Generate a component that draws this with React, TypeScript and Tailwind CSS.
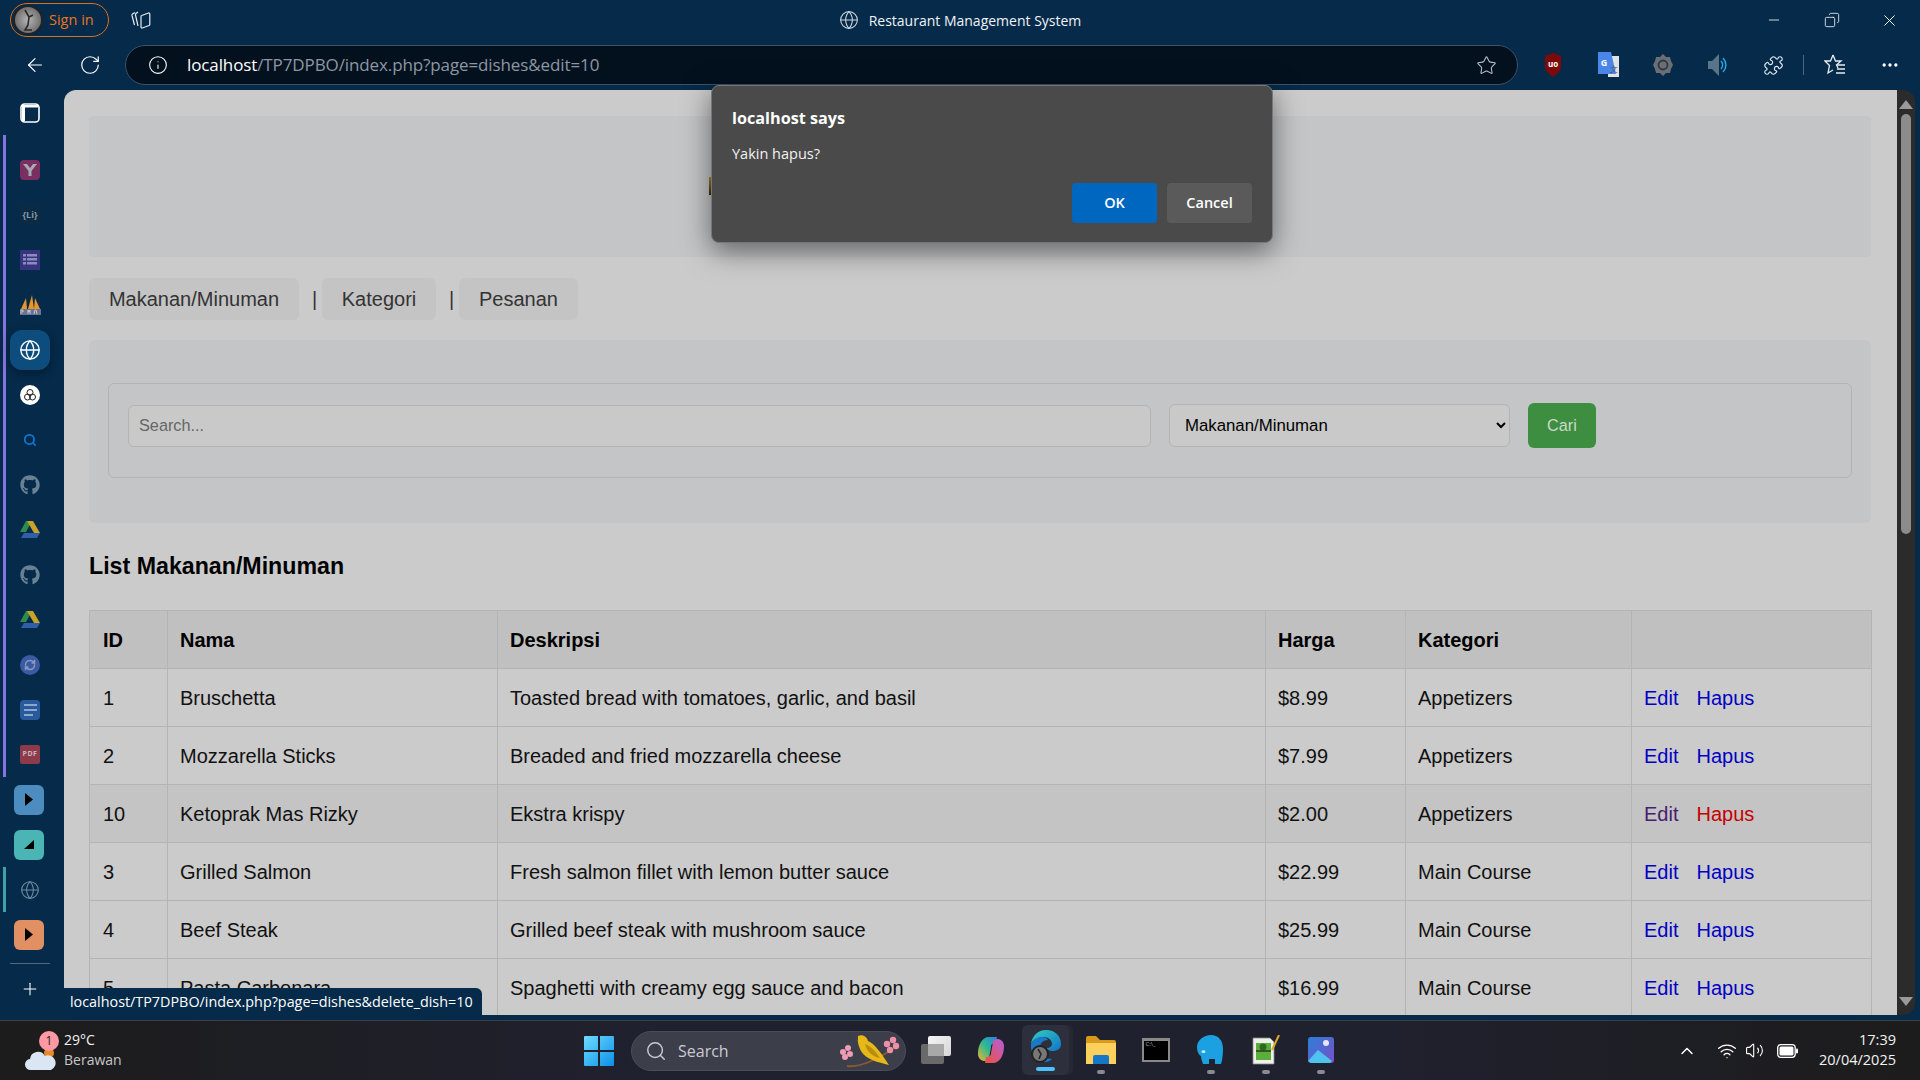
import { ArrowLeft, Copy, Globe, Info, Minus, MoreHorizontal, Plus, Puzzle, RefreshCw, RotateCw, Search, Star, X, ChevronUp, Wifi, Volume2 } from "lucide-react";
import { FaGithub } from "react-icons/fa";

const dishes = [
  { id: 1, nama: "Bruschetta", deskripsi: "Toasted bread with tomatoes, garlic, and basil", harga: "$8.99", kategori: "Appetizers" },
  { id: 2, nama: "Mozzarella Sticks", deskripsi: "Breaded and fried mozzarella cheese", harga: "$7.99", kategori: "Appetizers" },
  { id: 10, nama: "Ketoprak Mas Rizky", deskripsi: "Ekstra krispy", harga: "$2.00", kategori: "Appetizers" },
  { id: 3, nama: "Grilled Salmon", deskripsi: "Fresh salmon fillet with lemon butter sauce", harga: "$22.99", kategori: "Main Course" },
  { id: 4, nama: "Beef Steak", deskripsi: "Grilled beef steak with mushroom sauce", harga: "$25.99", kategori: "Main Course" },
  { id: 5, nama: "Pasta Carbonara", deskripsi: "Spaghetti with creamy egg sauce and bacon", harga: "$16.99", kategori: "Main Course" },
];

const ui = "font-['Open_Sans','Noto_Sans',sans-serif]";
const th = "border border-[#b4b4b4] bg-[#c0c0c0] px-[12px] text-left font-bold text-black first:pl-[13px]";
const td = "border border-[#b4b4b4] px-[12px] h-[58px] first:pl-[13px]";

function Slot({ children }: { children: React.ReactNode }) {
  return <div className="flex h-[45px] w-[48px] items-center justify-center">{children}</div>;
}

function Tile({ color, children }: { color: string; children: React.ReactNode }) {
  return <div className={`flex h-[30px] w-[30px] items-center justify-center rounded-md ${color}`}>{children}</div>;
}

function Drive() {
  return (
    <svg width="20" height="18" viewBox="0 0 20 18">
      <path d="M7 0h6l-6 11H1z" transform="translate(-1 0)" fill="#2f8a4c" />
      <path d="M7 0h6l7 12h-6z" fill="#c9a227" />
      <path d="M4 12h16l-3 5H1z" fill="#2f5fa8" />
    </svg>
  );
}

function Sidebar() {
  return (
    <div className="flex w-[64px] shrink-0 flex-col pl-[6px]">
      <Slot>
        <svg width="20" height="20" viewBox="0 0 20 20" fill="none">
          <rect x="1" y="1" width="18" height="18" rx="3.5" stroke="#fff" strokeWidth="1.6" />
          <path d="M2 2h16v2.500H5V18H2z" fill="#fff" />
        </svg>
      </Slot>
      <div className="-ml-[3px] flex flex-col border-l-[3px] border-[#8574e0] pt-[12px]">
        <Slot>
          <div className="flex h-5 w-5 items-center justify-center rounded-sm bg-[#7a2f60]">
            <svg width="14" height="12" viewBox="0 0 14 12"><path d="M0 0h4l3 4 3-4h4L8.5 7v5h-3V7z" fill="#a7a9b3" /></svg>
          </div>
        </Slot>
        <Slot>
          <div className={`flex h-5 w-5 items-center justify-center bg-[#0b2b45] text-[9px] font-bold text-[#8497a6] ${ui}`}>{"{Li}"}</div>
        </Slot>
        <Slot>
          <div className="flex h-5 w-5 items-center justify-center bg-[#383580]">
            <svg width="14" height="11" viewBox="0 0 14 11" fill="#8a8dbb">
              <path d="M0 0h3v2.5H0zM4 0h10v2.5H4zM0 4h3v2.5H0zM4 4h10v2.5H4zM0 8h3v2.5H0zM4 8h10v2.5H4z" />
            </svg>
          </div>
        </Slot>
        <Slot>
          <svg width="21" height="20" viewBox="0 0 21 20">
            <path d="M1 14 6 3l1 11zM8 14 12 0l2 14zM14 14l1-11 5 11z" fill="#e8962a" />
            <rect x="0" y="14" width="21" height="6" fill="#6a7390" />
            <path d="M1 19v-4h2v2H2M8 19v-4l1 2 1-2v4M14 19l1-4h1l1 4" stroke="#d6d9e6" strokeWidth="0.8" fill="none" />
          </svg>
        </Slot>
        <Slot>
          <div className="flex h-10 w-10 items-center justify-center rounded-xl bg-[#0d4d7e] shadow-[0_3px_8px_rgba(0,0,0,0.35)]">
            <Globe size={22} color="#fff" strokeWidth={1.5} />
          </div>
        </Slot>
        <Slot>
          <div className="flex h-5 w-5 items-center justify-center rounded-full bg-white">
            <svg width="14" height="14" viewBox="0 0 14 14" fill="none" stroke="#222" strokeWidth="1">
              <circle cx="7" cy="4.5" r="3" />
              <circle cx="4.5" cy="9" r="3" />
              <circle cx="9.5" cy="9" r="3" />
            </svg>
          </div>
        </Slot>
        <Slot><Search size={14} color="#0b78d0" strokeWidth={3} /></Slot>
        <Slot><FaGithub size={20} color="#6a8093" /></Slot>
        <Slot><Drive /></Slot>
        <Slot><FaGithub size={20} color="#6a8093" /></Slot>
        <Slot><Drive /></Slot>
        <Slot>
          <div className="flex h-5 w-5 items-center justify-center rounded-full bg-[#3a5aa5]">
            <RefreshCw size={12} color="#8d9bb8" strokeWidth={3} />
          </div>
        </Slot>
        <Slot>
          <div className="flex h-5 w-5 items-center justify-center rounded-sm bg-[#2a5a9e]">
            <svg width="13" height="12" viewBox="0 0 13 12" fill="#8ba7cb"><path d="M0 0h13v2H0zM0 5h13v2H0zM0 10h9v2H0z" /></svg>
          </div>
        </Slot>
        <Slot>
          <div className="relative flex h-[19px] w-5 items-center justify-center rounded-[2px] bg-[#8d3a4b]">
            <span className={`text-[7px] font-bold tracking-[0.5px] text-[#c9b6bd] ${ui}`}>PDF</span>
          </div>
        </Slot>
      </div>
      <div className="-ml-[1px]">
        <Slot><Tile color="bg-[#4d8cbe]"><svg width="8" height="13" viewBox="0 0 8 13"><path d="M0 0l8 6.5L0 13z" /></svg></Tile></Slot>
        <Slot><Tile color="bg-[#4bb4b5]"><svg width="10" height="9" viewBox="0 0 10 9"><path d="M10 0v9H0z" /></svg></Tile></Slot>
      </div>
      <div className="-ml-[3px] border-l-[3px] border-[#3fa3a6]">
        <Slot><Globe size={20} color="#6f8aa0" strokeWidth={1.3} /></Slot>
      </div>
      <div className="-ml-[1px]">
        <Slot><Tile color="bg-[#e09063]"><svg width="8" height="13" viewBox="0 0 8 13"><path d="M0 0l8 6.5L0 13z" /></svg></Tile></Slot>
      </div>
      <div className="mx-[4px] mt-[6px] h-px w-[40px] bg-[#52697d]" />
      <div className="mt-[2px]">
        <Slot><Plus size={20} color="#fff" strokeWidth={1.3} /></Slot>
      </div>
    </div>
  );
}

function Page() {
  return (
    <div className="flex-1 overflow-hidden rounded-tl-xl bg-[#cbcbcb] pt-[26px] pr-[26px] pl-[25px] font-['Liberation_Sans',Arial,sans-serif]">
      <div className="h-[141px] rounded-sm bg-[#c4c5c7]" />
      <div className="mt-[21px] flex items-center text-[20px] text-[#333]">
        <span className="flex h-[42px] w-[210px] items-center justify-center rounded-md bg-[#c4c4c4]">Makanan/Minuman</span>
        <span className="w-[23px] pl-[8px] text-center">|</span>
        <span className="flex h-[42px] w-[114px] items-center justify-center rounded-md bg-[#c4c4c4]">Kategori</span>
        <span className="w-[23px] pl-[8px] text-center">|</span>
        <span className="flex h-[42px] w-[119px] items-center justify-center rounded-md bg-[#c4c4c4]">Pesanan</span>
      </div>
      <div className="mt-[20px] h-[183px] rounded-md bg-[#c4c5c7] px-[19px] pt-[43px]">
        <div className="h-[95px] rounded-md border border-[#b4b4b4] px-[19px] pt-[19px]">
          <div className="flex h-[45px] items-center gap-[18px]">
            <input
              placeholder="Search..."
              className="h-[42px] w-[1023px] rounded-md border border-[#b4b4b4] bg-[#c9c9c9] px-[10px] text-[16.25px] outline-none placeholder:text-[#666]"
            />
            <select defaultValue="makanan" className="h-[43px] w-[341px] rounded-md border border-[#b4b4b4] bg-[#c9c9c9] px-[11px] text-[16.8px] text-black outline-none">
              <option value="makanan">Makanan/Minuman</option>
            </select>
            <button className="h-[45px] w-[68px] rounded-md bg-[#3e8e41] text-[16.25px] text-[#c9d9c9]">Cari</button>
          </div>
        </div>
      </div>
      <h2 className="mt-[29px] text-[23.2px] leading-[28px] font-bold text-black">List Makanan/Minuman</h2>
      <table className="mt-[30px] w-[1782px] table-fixed border-collapse text-[20px] text-[#111]">
        <colgroup>
          <col className="w-[78px]" />
          <col className="w-[330px]" />
          <col className="w-[768px]" />
          <col className="w-[140px]" />
          <col className="w-[226px]" />
          <col className="w-[240px]" />
        </colgroup>
        <thead>
          <tr className="h-[58px]">
            <th className={th}>ID</th>
            <th className={th}>Nama</th>
            <th className={th}>Deskripsi</th>
            <th className={th}>Harga</th>
            <th className={th}>Kategori</th>
            <th className={th}></th>
          </tr>
        </thead>
        <tbody>
          {dishes.map((d) => {
            const picked = d.id === 10;
            return (
              <tr key={d.id} className={picked ? "bg-[#c4c4c4]" : ""}>
                <td className={td}>{d.id}</td>
                <td className={td}>{d.nama}</td>
                <td className={td}>{d.deskripsi}</td>
                <td className={td}>{d.harga}</td>
                <td className={td}>{d.kategori}</td>
                <td className={td}>
                  <span className={picked ? "text-[#45206f]" : "text-[#0000c4]"}>Edit</span>
                  <span className={`ml-[18px] ${picked ? "text-[#c40000]" : "text-[#0000c4]"}`}>Hapus</span>
                </td>
              </tr>
            );
          })}
        </tbody>
      </table>
    </div>
  );
}

function Scrollbar() {
  return (
    <div className="flex w-[18px] shrink-0 flex-col items-center rounded-r-xl bg-[#2b2b2b] pt-[10px] pb-[9px]">
      <div className="h-0 w-0 border-x-[7px] border-b-[9px] border-x-transparent border-b-[#9a9a9a]" />
      <div className="mt-[5px] h-[420px] w-[10px] rounded-full bg-[#8c8c8c]" />
      <div className="mt-auto h-0 w-0 border-x-[7px] border-t-[9px] border-x-transparent border-t-[#9a9a9a]" />
    </div>
  );
}

function TitleBar() {
  return (
    <div className={`grid h-[45px] shrink-0 grid-cols-[1fr_auto_1fr] items-center pb-[5px] ${ui}`}>
      <div className="flex items-center pl-[10px]">
        <div className="flex h-[34px] w-[99px] items-center gap-[6px] rounded-full border border-[#d9701c] pl-[2px]">
          <div className="flex h-[30px] w-[30px] items-center justify-center rounded-full border-2 border-[#222] bg-[radial-gradient(circle,#b5b5b5,#555)]">
            <svg width="14" height="22" viewBox="0 0 14 22" fill="none" stroke="#2a2a2a" strokeWidth="1.6">
              <path d="M4 1l4 7-1 8-3 5h7M8 8l4-2" />
            </svg>
          </div>
          <span className="text-[14.5px] text-[#e8761e]">Sign in</span>
        </div>
        <svg className="ml-[21px]" width="22" height="20" viewBox="0 0 22 20" fill="none" stroke="#e6ebf0" strokeWidth="1.2">
          <path d="M5 2.500 2.500 4a1.500 1.500 0 0 0-.5 1.500L4.500 15M8 2 6 3.500a1.500 1.500 0 0 0-.5 1.500L8 16" />
          <path d="M11 6.500a1 1 0 0 1 .7-1L18.500 3a1 1 0 0 1 1.300 1v10.500a1 1 0 0 1-.7 1L12.300 18a1 1 0 0 1-1.300-1z" />
        </svg>
      </div>
      <div className="flex items-center gap-[10px] text-[14px] text-[#f0f3f6]">
        <Globe size={20} color="#cdd5dc" strokeWidth={1.3} />
        <span>Restaurant Management System</span>
      </div>
      <div className="flex items-center justify-end pr-[21px] text-white">
        <Minus size={16} strokeWidth={1.2} />
        <Copy size={16} strokeWidth={1.2} className="ml-[42px] -scale-x-100" />
        <X size={19} strokeWidth={1.2} className="ml-[40px]" />
      </div>
    </div>
  );
}

function ToolBar() {
  return (
    <div className={`flex h-[45px] shrink-0 items-center pb-[5px] ${ui}`}>
      <div className="flex w-[125px] items-center pl-[24px] text-white">
        <ArrowLeft size={22} strokeWidth={1.3} />
        <RotateCw size={22} strokeWidth={1.3} className="ml-[33px]" />
      </div>
      <div className="flex h-[40px] w-[1393px] items-center rounded-full border border-[#3c5267] bg-[#03111f] pr-[20px] pl-[22px]">
        <Info size={20} color="#fff" strokeWidth={1.3} />
        <span className="ml-[19px] text-[17px] tracking-[-0.11px] text-[#8c97a3]">
          <span className="text-white">localhost</span>/TP7DPBO/index.php?page=dishes&amp;edit=10
        </span>
        <Star size={21} color="#b8c0c8" strokeWidth={1.2} className="ml-auto" />
      </div>
      <div className="ml-[25px] flex w-[20px] justify-center">
        <svg width="18" height="26" viewBox="0 0 18 26">
          <path d="M9 1l8 3v10c0 5-4 8-8 11-4-3-8-6-8-11V4z" fill="#7d0a0a" />
          <text x="9" y="15" textAnchor="middle" fontSize="8" fontWeight="700" fill="#fff">uo</text>
        </svg>
      </div>
      <svg className="ml-[35px]" width="22" height="26" viewBox="0 0 22 26">
        <path d="M10 4h11v21H10z" fill="#dfe3e8" />
        <path d="M0 0h13l5 22H0z" fill="#4a86e8" />
        <text x="6" y="14" textAnchor="middle" fontSize="9" fontWeight="700" fill="#fff">G</text>
        <text x="16" y="20" textAnchor="middle" fontSize="8" fill="#555">文</text>
      </svg>
      <svg className="ml-[33px]" width="20" height="22" viewBox="0 0 20 22">
        <path d="M10 0l3 3h4l1 4 2 4-2 4-1 4h-4l-3 3-3-3H3l-1-4-2-4 2-4 1-4h4z" fill="#6b6f73" />
        <circle cx="10" cy="11" r="4.5" fill="none" stroke="#2a3a48" strokeWidth="1.8" />
      </svg>
      <svg className="ml-[35px]" width="20" height="24" viewBox="0 0 20 24" fill="none">
        <path d="M0 8h4l7-7v22l-7-7H0z" fill="#58758a" />
        <path d="M13 8a6 6 0 0 1 0 8M15 5a10 10 0 0 1 0 14" stroke="#2ba6e6" strokeWidth="1.5" />
      </svg>
      <Puzzle size={21} color="#e6ebf0" strokeWidth={1.3} className="ml-[35px]" />
      <div className="ml-[19px] h-[20px] w-px bg-[#4f6579]" />
      <svg className="ml-[20px]" width="22" height="22" viewBox="0 0 22 22" fill="none" stroke="#e6ebf0" strokeWidth="1.3">
        <path d="M9 1l2.5 6H17l-4.5 4 1.5 3M9 1 6.5 7H1l4.5 4.500L4 19l5-3" />
        <path d="M13 11h8M13 15h8M12 19h9" />
      </svg>
      <MoreHorizontal size={20} color="#fff" strokeWidth={2} className="ml-[34px]" />
    </div>
  );
}

function Dot() {
  return <div className="mt-[4px] h-[4px] w-[8px] rounded-full bg-[#8a8a90]" />;
}

function TaskApp({ children, dot = true }: { children: React.ReactNode; dot?: boolean }) {
  return (
    <div className="flex h-full w-[55px] flex-col items-center justify-end pb-[6px]">
      <div className="flex h-[32px] items-center justify-center">{children}</div>
      {dot ? <Dot /> : <div className="mt-[4px] h-[4px]" />}
    </div>
  );
}

function Taskbar() {
  return (
    <div className={`flex h-[60px] shrink-0 items-center border-t border-[#3c3f44] bg-[linear-gradient(90deg,#1c1c1c_0%,#20212f_35%,#20212f_70%,#1c1c1c_100%)] ${ui}`}>
      <div className="flex w-[584px] shrink-0 items-center">
        <div className="relative ml-[25px] h-[40px] w-[39px]">
          <div className="absolute top-[0px] left-[14px] z-10 flex h-[20px] w-[20px] items-center justify-center rounded-full bg-[#ff99a4] text-[12px] text-[#222]">1</div>
          <svg className="absolute top-[14px] left-0" width="32" height="26" viewBox="0 0 32 26">
            <circle cx="24" cy="8" r="5" fill="#e8892a" />
            <path d="M6 25a5.500 5.500 0 0 1-1-11 8 8 0 0 1 15-3 7 7 0 0 1 6 14z" fill="#dbe6f5" />
          </svg>
        </div>
        <div className="mb-[2px] flex flex-col text-[14px] leading-[20px]">
          <span className="text-[#f2f2f2]">29°C</span>
          <span className="text-[#c8c8c8]">Berawan</span>
        </div>
      </div>
      <svg width="30" height="30" viewBox="0 0 30 30" className="shrink-0">
        <defs>
          <linearGradient id="win" x1="0" y1="0" x2="1" y2="1">
            <stop offset="0" stopColor="#6fdcff" />
            <stop offset="1" stopColor="#0a8fe8" />
          </linearGradient>
        </defs>
        <path d="M0 1a1 1 0 0 1 1-1h13v14H0zM16 0h13a1 1 0 0 1 1 1v13H16zM0 16h14v14H1a1 1 0 0 1-1-1zM16 16h14v13a1 1 0 0 1-1 1H16z" fill="url(#win)" />
      </svg>
      <div className="ml-[17px] flex h-[40px] w-[275px] shrink-0 items-center rounded-full border border-[#4a4c58] bg-[#3c3e4a] pl-[13px] text-[#c9ccd2]">
        <Search size={22} strokeWidth={1.6} />
        <span className="ml-[11px] text-[16px]">Search</span>
        <svg className="ml-auto mr-[5px]" width="60" height="34" viewBox="0 0 60 34">
          <path d="M7 32c14 2 32-8 51-20" stroke="#8a5a34" strokeWidth="1.800" fill="none" />
          <path d="M18 2c5-2 9 1 10 5 6 2 14 13 21 24-11-3-23-5-28-14-2-4-4-9-3-15z" fill="#e6b818" />
          <path d="M25 10c6 2 11 8 15 14-7-1-13-6-15-14z" fill="#b98d12" />
          <path d="M18 3l-5 1 5 2z" fill="#444" />
          <g fill="#ee9db5">
            <circle cx="3" cy="18" r="3" />
            <circle cx="8" cy="14" r="3" />
            <circle cx="10" cy="20" r="3" />
            <circle cx="5" cy="23" r="3" />
          </g>
          <g fill="#ee8fa8">
            <circle cx="47" cy="10" r="3.200" />
            <circle cx="53" cy="6" r="3.200" />
            <circle cx="56" cy="12" r="3.200" />
            <circle cx="50" cy="16" r="3.200" />
          </g>
        </svg>
      </div>
      <div className="ml-[2px] flex h-full items-stretch">
        <TaskApp dot={false}>
          <div className="relative h-[28px] w-[30px]">
            <div className="absolute bottom-0 left-0 h-[20px] w-[23px] rounded-[2px] bg-[#6a6a6a]" />
            <div className="absolute top-0 right-0 h-[20px] w-[23px] rounded-[2px] bg-[linear-gradient(135deg,#f5f5f5,#d6d6d6)]" />
            <div className="absolute top-[8px] left-[7px] h-[12px] w-[16px] bg-[#a8a8a8]" />
          </div>
        </TaskApp>
        <TaskApp dot={false}>
          <svg width="28" height="28" viewBox="0 0 28 28">
            <defs>
              <linearGradient id="cpA" x1="0" y1="1" x2="1" y2="0">
                <stop offset="0" stopColor="#f5b52e" />
                <stop offset="0.5" stopColor="#2dba8f" />
                <stop offset="1" stopColor="#2d7fe8" />
              </linearGradient>
              <linearGradient id="cpB" x1="0" y1="1" x2="1" y2="0">
                <stop offset="0" stopColor="#f0503c" />
                <stop offset="1" stopColor="#b45fe0" />
              </linearGradient>
            </defs>
            <path d="M1 18C1 9 5 1 12 1h8l-1 6c-3 0-5 1-5 4l-2 11c-1 5-11 4-11-4z" fill="url(#cpA)" />
            <path d="M27 10c0 9-4 17-11 17H8l1-6c3 0 5-1 5-4l2-11c1-5 11-4 11 4z" fill="url(#cpB)" />
          </svg>
        </TaskApp>
        <div className="mx-[4px] mt-[4px] flex h-[50px] w-[47px] flex-col items-center self-start rounded-md bg-[#2d2f3c] shadow-[4px_0_0_#262834]">
          <svg className="mt-[5px]" width="32" height="34" viewBox="0 0 32 34">
            <defs>
              <linearGradient id="edge" x1="0" y1="0" x2="1" y2="1">
                <stop offset="0" stopColor="#2fd0c0" />
                <stop offset="1" stopColor="#1173c8" />
              </linearGradient>
            </defs>
            <path d="M16 0c9 0 15 6 15 14 0 5-4 7-8 7-3 0-6-1-6-3 3 0 5-2 5-4 0-4-4-7-8-7C7 7 3 10 1 14 2 6 8 0 16 0z" fill="url(#edge)" />
            <path d="M1 14c2-4 6-7 11-7 3 0 5 1 6 3-6 0-9 5-8 10 1 6 6 9 12 9-2 2-4 3-7 3C7 32 0 24 1 14z" fill="#1a78c8" />
            <circle cx="10" cy="24" r="8" fill="#777" stroke="#222" strokeWidth="2" />
            <path d="M8 19l3 5-2 5" stroke="#222" strokeWidth="1.5" fill="none" />
          </svg>
          <div className="mt-[3px] h-[4px] w-[19px] rounded-full bg-[#4cc2ff]" />
        </div>
        <TaskApp>
          <svg width="30" height="28" viewBox="0 0 30 28">
            <path d="M0 2a2 2 0 0 1 2-2h8l4 4h14a2 2 0 0 1 2 2v4H0z" fill="#d99a1c" />
            <path d="M0 7h30v21H0z" fill="#fcd05c" />
            <path d="M7 21a2 2 0 0 1 2-2h12a2 2 0 0 1 2 2v7H7z" fill="#1577c8" />
          </svg>
        </TaskApp>
        <TaskApp dot={false}>
          <div className="h-[24px] w-[28px] border-2 border-t-[3px] border-[#8a8a8a] bg-black pl-[2px] text-[6px] leading-[7px] text-[#bbb]">C:\_</div>
        </TaskApp>
        <TaskApp>
          <svg width="28" height="30" viewBox="0 0 28 30">
            <path d="M14 0C21 0 26 5 26 14c0 7-1 12-2 15h-6v-5h-6v5H6c-1-3-2-6-2-8-2-1-4-4-4-9C0 5 7 0 14 0z" fill="#1ba1e2" />
            <path d="M5 16c1 1 2 1 3 0" stroke="#d6eaf8" strokeWidth="2.500" fill="none" />
          </svg>
        </TaskApp>
        <TaskApp>
          <svg width="28" height="30" viewBox="0 0 28 30">
            <path d="M1 3h17l4 4v22H1z" fill="#eef0ea" stroke="#888" strokeWidth="0.8" />
            <rect x="4" y="8" width="15" height="17" fill="#5cae3c" />
            <circle cx="11" cy="12" r="3.500" fill="#2d6a1f" />
            <path d="M4 16h15" stroke="#2d3a1f" strokeWidth="1.500" />
            <path d="M27 0l-7 15" stroke="#e0a92a" strokeWidth="2" />
          </svg>
        </TaskApp>
        <TaskApp>
          <svg width="26" height="26" viewBox="0 0 26 26">
            <defs>
              <linearGradient id="ph" x1="0" y1="0" x2="1" y2="1">
                <stop offset="0" stopColor="#2b7fd8" />
                <stop offset="1" stopColor="#7b4fc8" />
              </linearGradient>
            </defs>
            <rect width="26" height="26" rx="3" fill="url(#ph)" />
            <circle cx="18" cy="6" r="3" fill="#e8e6f5" />
            <path d="M0 24l10-11 14 11-2 2H3z" fill="#4ec3f0" />
          </svg>
        </TaskApp>
      </div>
      <div className="ml-auto flex items-center pr-[24px] text-white">
        <ChevronUp size={20} strokeWidth={1.8} />
        <Wifi size={20} strokeWidth={1.6} className="ml-[20px]" />
        <Volume2 size={19} strokeWidth={1.4} className="ml-[8px]" />
        <svg className="ml-[13px]" width="21" height="14" viewBox="0 0 21 14">
          <rect x="0.700" y="0.700" width="17.500" height="12.600" rx="3" fill="none" stroke="#fff" strokeWidth="1.300" />
          <rect x="2.500" y="2.500" width="14" height="9" rx="1.500" fill="#fff" />
          <rect x="19" y="4.500" width="2" height="5" rx="1" fill="#fff" />
        </svg>
        <div className="mb-[2px] ml-[21px] flex flex-col items-end text-[14.5px] leading-[20px] text-[#f2f2f2]">
          <span>17:39</span>
          <span>20/04/2025</span>
        </div>
      </div>
    </div>
  );
}

export default function App() {
  return (
    <div className="relative flex h-[1080px] w-[1920px] flex-col overflow-hidden bg-[#052a4a]">
      <TitleBar />
      <ToolBar />
      <div className="flex min-h-0 flex-1 pr-[5px] pb-[5px]">
        <Sidebar />
        <Page />
        <Scrollbar />
      </div>
      <Taskbar />

      {/* status bubble */}
      <div className={`absolute top-[988px] left-[64px] flex h-[27px] w-[418px] items-center rounded-tr-md bg-[#052a4a] pl-[6px] text-[14.35px] text-white ${ui}`}>
        localhost/TP7DPBO/index.php?page=dishes&amp;delete_dish=10
      </div>

      {/* edge of the page heading's emoji, peeking out from behind the dialog */}
      <div className="absolute top-[177px] left-[709px] h-[18px] w-[2px] bg-[linear-gradient(#a88a30,#3a2a10)]" />

      {/* js confirm */}
      <div className={`absolute top-[85px] left-[711px] h-[158px] w-[562px] rounded-lg border border-[#777] bg-[#4a4a4a] px-[20px] shadow-[0_8px_28px_rgba(0,0,0,0.5)] ${ui}`}>
        <div className="mt-[20px] text-[16.2px] leading-[24px] font-bold text-white">localhost says</div>
        <div className="mt-[14px] text-[14.5px] leading-[20px] text-[#f2f2f2]">Yakin hapus?</div>
        <div className="mt-[19px] flex justify-end gap-[10px]">
          <button className="h-[40px] w-[85px] rounded-[4px] bg-[#0067c0] text-[14.5px] font-semibold text-white">OK</button>
          <button className="h-[40px] w-[85px] rounded-[4px] bg-[#5a5a5a] text-[14.5px] font-semibold text-white">Cancel</button>
        </div>
      </div>
    </div>
  );
}
